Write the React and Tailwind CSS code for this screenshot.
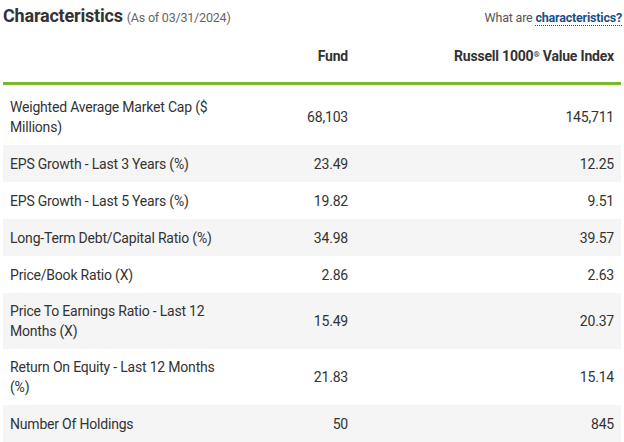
const ROWS = [
  ["Weighted Average Market Cap ($ Millions)", "68,103", "145,711", true],
  ["EPS Growth - Last 3 Years (%)", "23.49", "12.25"],
  ["EPS Growth - Last 5 Years (%)", "19.82", "9.51"],
  ["Long-Term Debt/Capital Ratio (%)", "34.98", "39.57"],
  ["Price/Book Ratio (X)", "2.86", "2.63"],
  ["Price To Earnings Ratio - Last 12 Months (X)", "15.49", "20.37", true],
  ["Return On Equity - Last 12 Months (%)", "21.83", "15.14", true],
  ["Number Of Holdings", "50", "845"],
];

export default function App() {
  return (
    <div className="w-[624px] h-[442px] overflow-hidden bg-white text-[#333] tracking-[-0.2px]" style={{ fontFamily: "Roboto, 'Liberation Sans', sans-serif" }}>
      <div className="flex items-baseline justify-between pl-[3px] pr-[2px] pt-[2px] h-[30px]">
        <div>
          <span className="text-[18px] font-bold text-[#333]">Characteristics</span>
          <span className="text-[12.5px] text-[#666] ml-1">(As of 03/31/2024)</span>
        </div>
        <div className="text-[12.5px] text-[#555]">
          What are{" "}
          <span className="font-bold text-[#1a4f8b] border-b border-dotted border-[#1a4f8b]">characteristics?</span>
        </div>
      </div>
      <div className="mx-[3px]">
        <div className="flex items-center h-[55px] text-[14px] font-bold border-b-[3px] border-[#7ab929]">
          <div className="w-[268px]" />
          <div className="w-[77px] text-right">Fund</div>
          <div className="flex-1 text-right pr-[7px]">Russell 1000<sup className="text-[8px]">®</sup> Value Index</div>
        </div>
        <div className="h-[4px]" />
        {ROWS.map(([label, fund, idx, tall], i) => (
          <div key={label} className={`flex items-center text-[14px] leading-[20px] ${tall ? "h-[56px]" : "h-[37px]"} ${i % 2 ? "bg-[#f5f5f5]" : "bg-white"}`}>
            <div className="w-[268px] pl-[7px] pr-[40px]">{label}</div>
            <div className="w-[77px] text-right">{fund}</div>
            <div className="flex-1 text-right pr-[7px]">{idx}</div>
          </div>
        ))}
      </div>
    </div>
  );
}
